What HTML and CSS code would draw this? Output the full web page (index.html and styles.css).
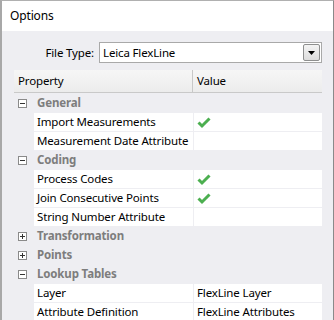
FILE: index.html
```html
<!DOCTYPE html>
<html lang="en">
<head>
    <meta charset="UTF-8"/>
    <title>Options</title>
    <link rel="stylesheet" href="styles.css">
</head>
<body>
    <div class="window">
        <header class="titlebar">Options</header>
        <main class="content">
            <div class="filetype">
                <label class="filetype-label">File Type:</label>
                <div class="combo">
                    <span class="combo-text">Leica FlexLine</span>
                    <span class="combo-button"><svg width="7" height="4" viewBox="0 0 7 4"><path d="M0 0h7L3.5 4z" fill="#000"/></svg></span>
                </div>
            </div>
            <div class="grid-header">
                <div class="col-property">Property</div>
                <div class="col-value">Value</div>
            </div>
            <div class="grid">
                <div class="toggle minus"></div><div class="category">General</div>
                <div></div><div class="cell">Import Measurements</div><div class="cell"><svg class="check" width="16" height="16" viewBox="0 0 16 16"><path d="M2.5 8.5l3.5 3.5 7.5-7.5" fill="none" stroke="#4caf50" stroke-width="3"/></svg></div>
                <div></div><div class="cell">Measurement Date Attribute</div><div class="cell"></div>

                <div class="toggle minus"></div><div class="category">Coding</div>
                <div></div><div class="cell">Process Codes</div><div class="cell"><svg class="check" width="16" height="16" viewBox="0 0 16 16"><path d="M2.5 8.5l3.5 3.5 7.5-7.5" fill="none" stroke="#4caf50" stroke-width="3"/></svg></div>
                <div></div><div class="cell">Join Consecutive Points</div><div class="cell"><svg class="check" width="16" height="16" viewBox="0 0 16 16"><path d="M2.5 8.5l3.5 3.5 7.5-7.5" fill="none" stroke="#4caf50" stroke-width="3"/></svg></div>
                <div></div><div class="cell">String Number Attribute</div><div class="cell"></div>

                <div class="toggle plus"></div><div class="category">Transformation</div>
                <div class="toggle plus"></div><div class="category">Points</div>

                <div class="toggle minus"></div><div class="category">Lookup Tables</div>
                <div></div><div class="cell">Layer</div><div class="cell">FlexLine Layer</div>
                <div></div><div class="cell">Attribute Definition</div><div class="cell">FlexLine Attributes</div>
            </div>
        </main>
    </div>
</body>
</html>
```

FILE: styles.css
```css
/**/
body {
    margin: 0;
    font-family: 'Noto Sans', 'Open Sans', sans-serif;
    font-size: 11.5px;
    letter-spacing: -0.15px;
    color: #000;
}

.window {
    width: 334px;
    height: 320px;
    box-sizing: border-box;
    border-left: 2px solid #a8a8a8;
    border-right: 1px solid #8a8a8a;
    border-top: 1px solid #b0b0b0;
    display: flex;
    flex-direction: column;
    overflow: hidden;
}

.titlebar {
    height: 30px;
    flex: none;
    background-color: #fff;
    padding-left: 8px;
    line-height: 29px;
    font-size: 12px;
}

.content {
    flex: 1;
    background-color: #eeeef2;
    padding: 11px 11px 0 12px;
}

.filetype {
    display: flex;
    align-items: center;
    height: 21px;
    margin-bottom: 7px;
}

.filetype-label {
    width: 80px;
    text-align: right;
    padding-right: 5px;
}

.combo {
    flex: 1;
    height: 21px;
    box-sizing: border-box;
    border: 1px solid #a9a9a9;
    background-color: #fff;
    display: flex;
    align-items: center;
    padding-left: 3px;
}

.combo-text {
    flex: 1;
}

.combo-button {
    width: 17px;
    height: 17px;
    box-sizing: border-box;
    margin-right: 1px;
    border: 1px solid #8e8f8f;
    border-radius: 2px;
    background: linear-gradient(#f4f4f4, #dcdcdc);
    display: flex;
    align-items: center;
    justify-content: center;
}

.grid-header {
    display: grid;
    grid-template-columns: 179px 1fr;
    height: 22px;
    line-height: 22px;
    background: linear-gradient(#f6f6f6, #ececec);
    border-bottom: 1px solid #c9c9c9;
}

.col-property {
    padding-left: 4px;
    border-right: 1px solid #c8c8c8;
}

.col-value {
    padding-left: 4px;
}

.grid {
    display: grid;
    grid-template-columns: 19px 159px 1fr;
    grid-auto-rows: 18px;
    row-gap: 1px;
    column-gap: 1px;
    padding-top: 1px;
}

.cell {
    background-color: #fff;
    line-height: 18px;
    padding-left: 3px;
    white-space: nowrap;
    overflow: hidden;
    display: flex;
    align-items: center;
}

.category {
    grid-column: 2 / 4;
    font-weight: bold;
    color: #7d7d7d;
    line-height: 18px;
    padding-left: 3px;
}

.toggle {
    align-self: center;
    justify-self: start;
    margin-left: 4px;
    width: 9px;
    height: 9px;
    box-sizing: border-box;
    border: 1px solid #8a8a8a;
    background-color: #fff;
    position: relative;
}

.toggle::before {
    content: '';
    position: absolute;
    left: 1px;
    top: 3px;
    width: 5px;
    height: 1px;
    background-color: #333;
}

.toggle.plus::after {
    content: '';
    position: absolute;
    left: 3px;
    top: 1px;
    width: 1px;
    height: 5px;
    background-color: #333;
}

.check {
    margin-left: -1px;
}
```
